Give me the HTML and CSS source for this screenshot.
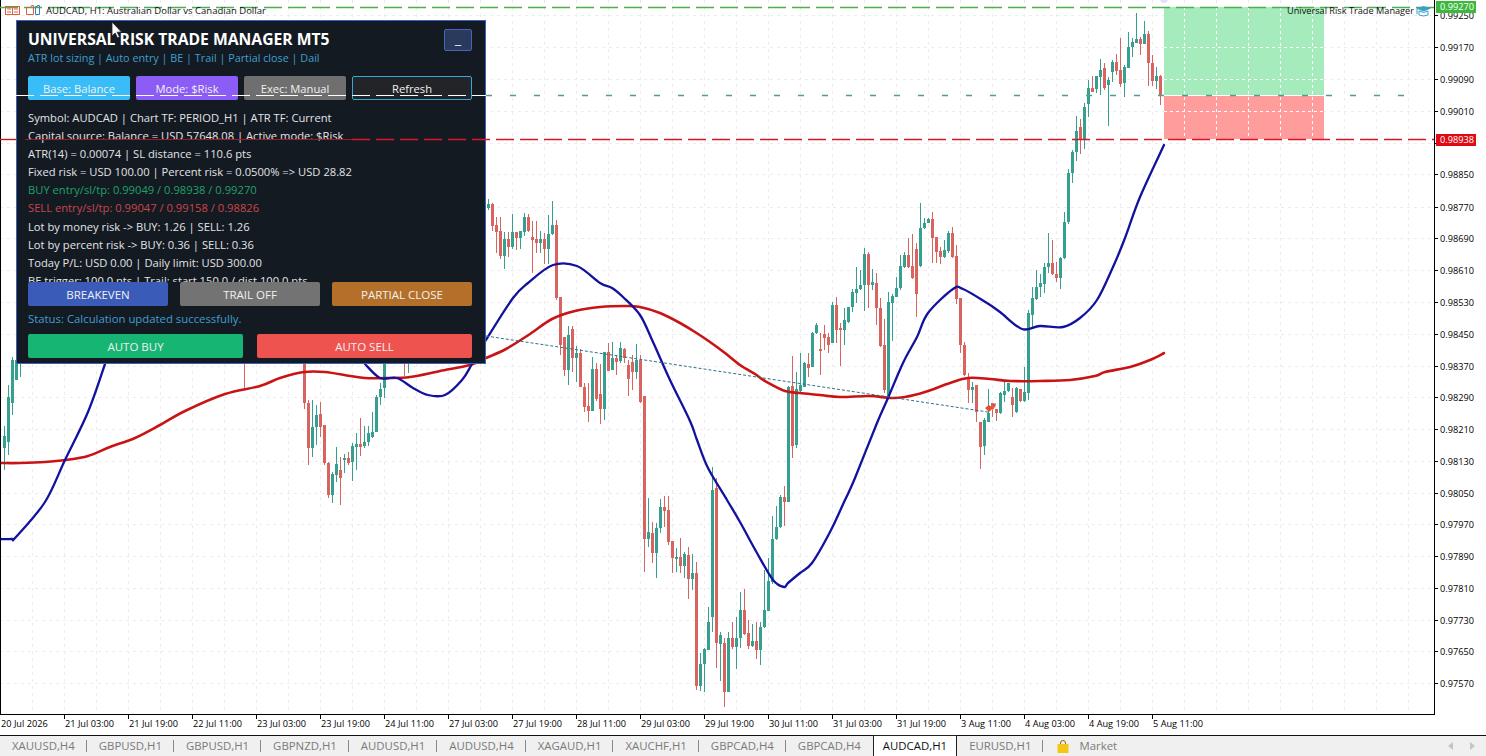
FILE: index.html
```html
<!DOCTYPE html>
<html lang="en">
<head>
    <meta charset="UTF-8">
    <title>AUDCAD,H1</title>
    <link rel="stylesheet" href="styles.css">
</head>
<body>
    <div class="chart">
        <svg id="plot" class="plot" width="1486" height="736"></svg>

        <div class="panel">
            <div class="panel_head">
                <div>
                    <div class="panel_title">UNIVERSAL RISK TRADE MANAGER MT5</div>
                    <div class="panel_sub">ATR lot sizing | Auto entry | BE | Trail | Partial close | Dail</div>
                </div>
                <button class="btn_min">_</button>
            </div>
            <div class="row_top">
                <button class="btn btn_base">Base: Balance</button>
                <button class="btn btn_mode">Mode: $Risk</button>
                <button class="btn btn_exec">Exec: Manual</button>
                <button class="btn btn_refresh">Refresh</button>
            </div>
            <div class="info">
                <div>Symbol: AUDCAD | Chart TF: PERIOD_H1 | ATR TF: Current</div>
                <div>Capital source: Balance = USD 57648.08 | Active mode: $Risk</div>
                <div>ATR(14) = 0.00074 | SL distance = 110.6 pts</div>
                <div>Fixed risk = USD 100.00 | Percent risk = 0.0500% =&gt; USD 28.82</div>
                <div class="info_buy">BUY entry/sl/tp: 0.99049 / 0.98938 / 0.99270</div>
                <div class="info_sell">SELL entry/sl/tp: 0.99047 / 0.99158 / 0.98826</div>
                <div>Lot by money risk -&gt; BUY: 1.26 | SELL: 1.26</div>
                <div>Lot by percent risk -&gt; BUY: 0.36 | SELL: 0.36</div>
                <div>Today P/L: USD 0.00 | Daily limit: USD 300.00</div>
                <div>BE trigger: 100.0 pts | Trail: start 150.0 / dist 100.0 pts</div>
            </div>
            <div class="row_mid">
                <button class="btn btn_be">BREAKEVEN</button>
                <button class="btn btn_trail">TRAIL OFF</button>
                <button class="btn btn_partial">PARTIAL CLOSE</button>
            </div>
            <div class="status">Status: Calculation updated successfully.</div>
            <div class="row_auto">
                <button class="btn btn_buy">AUTO BUY</button>
                <button class="btn btn_sell">AUTO SELL</button>
            </div>
        </div>

        <svg id="over" class="over" width="1486" height="736"></svg>
    </div>

    <div class="tabs">
        <div class="tab">XAUUSD,H4</div>
        <div class="tab">GBPUSD,H1</div>
        <div class="tab">GBPUSD,H1</div>
        <div class="tab">GBPNZD,H1</div>
        <div class="tab">AUDUSD,H1</div>
        <div class="tab">AUDUSD,H4</div>
        <div class="tab">XAGAUD,H1</div>
        <div class="tab">XAUCHF,H1</div>
        <div class="tab">GBPCAD,H4</div>
        <div class="tab tab_last">GBPCAD,H4</div>
        <div class="tab tab_active">AUDCAD,H1</div>
        <div class="tab">EURUSD,H1</div>
        <div class="tab tab_market">
            <svg width="12" height="13" viewBox="0 0 12 13">
                <path d="M3.500 5V3a2.500 2.500 0 0 1 5 0v2" fill="none" stroke="#8a6a10" stroke-width="1"/>
                <rect x="0.5" y="4" width="11" height="9" fill="#f5c518"/>
            </svg>
            Market
        </div>
        <div class="tabs_nav">
            <svg width="6" height="8" viewBox="0 0 6 8"><path d="M5 0v8L0 4z" fill="#c4c4c4"/></svg>
            <svg width="6" height="8" viewBox="0 0 6 8"><path d="M1 0v8l5-4z" fill="#c4c4c4"/></svg>
        </div>
    </div>

    <script src="chart.js"></script>
</body>
</html>
```

FILE: styles.css
```css
* {
    box-sizing: border-box;
}
body {
    margin: 0;
    width: 1486px;
    height: 756px;
    overflow: hidden;
    background-color: #fff;
    font-family: "Open Sans", "Noto Sans", sans-serif;
}
.chart {
    position: relative;
    height: 736px;
}
.plot, .over {
    display: block;
}
.over {
    position: absolute;
    left: 0;
    top: 0;
    pointer-events: none;
}
.axis_text {
    font-family: "Open Sans", sans-serif;
    font-size: 9.2px;
    fill: #000;
}
.top_text {
    font-family: "Open Sans", sans-serif;
    font-size: 9.5px;
    fill: #111;
}
.top_text_right {
    font-family: "Open Sans", sans-serif;
    font-size: 9.2px;
    fill: #111;
}

/* panel */
.panel {
    position: absolute;
    left: 16px;
    top: 20px;
    width: 470px;
    height: 344px;
    padding: 8px 13px 0 11px;
    background-color: #141a22;
    border: 1px solid #3d5fc0;
    color: #e2e4e6;
    display: flex;
    flex-direction: column;
}
.panel_head {
    display: flex;
    justify-content: space-between;
    height: 47px;
}
.panel_title {
    font-size: 15.7px;
    font-weight: 700;
    line-height: 21px;
    color: #fff;
}
.panel_sub {
    font-size: 10.8px;
    line-height: 16px;
    color: #3f9fd0;
}
.btn_min {
    width: 28px;
    height: 22px;
    padding: 0;
    background-color: #2a3a5e;
    border: 1px solid #4a62b8;
    border-radius: 2px;
    color: #fff;
    font-size: 11px;
}
.btn {
    height: 24px;
    padding: 0;
    border: 0;
    border-radius: 2px;
    color: #f0f0f0;
    font-family: inherit;
    font-size: 11.5px;
}
.row_top {
    display: flex;
    gap: 6px;
}
.row_top .btn {
    width: 102px;
    font-size: 11.2px;
}
.row_top .btn_refresh {
    width: 120px;
    background-color: #222428;
    border: 1px solid #38a8d8;
}
.btn_base { background-color: #38bdf8; }
.btn_mode { background-color: #8b5cf6; }
.btn_exec { background-color: #6f6f6f; }
.info {
    margin-top: 9px;
    height: 173px;
    overflow: hidden;
    font-size: 11.2px;
    line-height: 18.1px;
    flex: none;
}
.info_buy { color: #1fa168; }
.info_sell { color: #c8474b; }
.row_mid {
    display: flex;
    gap: 12px;
}
.row_mid .btn {
    width: 140px;
}
.btn_be { background-color: #3a5bb8; }
.btn_trail { background-color: #737373; }
.btn_partial { background-color: #b4702a; }
.status {
    height: 28px;
    line-height: 26px;
    font-size: 11.35px;
    color: #3f9fd0;
}
.row_auto {
    display: flex;
    gap: 14px;
}
.row_auto .btn {
    width: 215px;
}
.btn_buy { background-color: #16b574; }
.btn_sell { background-color: #ef5350; }

/* tabs */
.tabs {
    display: flex;
    align-items: stretch;
    height: 20px;
    background-color: #f0f0f0;
    font-size: 11.4px;
    color: #7a7a7a;
    line-height: 20px;
}
.tab {
    position: relative;
    padding: 0 12px 0 12px;
    white-space: nowrap;
}
.tab::after {
    content: "";
    position: absolute;
    right: 0;
    top: 4px;
    height: 12px;
    border-right: 1px solid #8a8a8a;
}
.tab_last::after, .tab_active::after, .tab_market::after {
    display: none;
}
.tab_active {
    background-color: #fff;
    color: #111;
    border: 1px solid #222;
    border-bottom: 0;
    margin: -1px 0 0 0;
    padding: 0 9px;
    height: 21px;
}
.tab_market {
    display: flex;
    align-items: center;
    gap: 10px;
    padding-left: 14px;
}
.tabs_nav {
    margin-left: auto;
    margin-right: 11px;
    display: flex;
    align-items: center;
    gap: 15px;
}
```

FILE: chart.js
```js
// g/r x wickTop bodyTop bodyBot wickBot
const BARS = `
g 4 426 436 448 470
g 8 385 397 442 455
g 12 357 360 403 415
g 16 355 360 380 380
g 20 360 362 364 377
r 244 360 362 364 388
r 304 360 362 403 409
r 308 400 403 448 465
g 312 400 427 448 457
g 316 405 415 427 445
r 320 402 414 427 437
r 324 425 425 463 465
r 328 462 463 495 498
g 332 472 474 495 503
g 336 447 464 475 482
r 340 457 470 478 505
g 344 454 458 460 473
r 348 452 458 463 465
g 352 443 446 462 481
g 356 433 444 447 470
r 360 418 444 447 456
g 364 426 442 446 448
g 368 426 433 442 446
g 372 412 432 437 438
g 376 395 397 432 432
g 380 383 389 397 405
g 384 360 362 388 398
r 404 360 362 364 376
g 408 360 362 364 373
g 488 199 204 208 210
r 492 203 204 226 231
r 496 217 225 232 253
r 500 217 231 256 259
g 504 232 239 256 269
r 508 232 239 247 257
g 512 214 232 247 249
r 516 232 232 238 250
g 520 231 231 238 249
g 524 213 217 232 236
r 528 214 217 231 232
r 532 221 237 240 273
r 536 221 239 243 253
g 540 231 239 243 253
r 544 233 239 249 264
g 548 215 234 249 264
g 552 201 225 234 235
r 556 220 225 298 300
r 560 297 297 345 355
r 564 337 337 370 376
g 568 326 335 370 385
r 572 326 329 358 372
g 576 346 353 358 382
r 580 349 353 387 387
r 584 383 387 407 412
r 588 383 406 411 422
g 592 357 369 411 411
r 596 363 369 399 401
r 600 364 394 409 424
g 604 352 352 409 420
r 608 343 352 371 371
g 612 342 358 370 370
r 616 355 358 362 375
g 620 342 348 361 363
r 624 348 349 358 363
r 628 360 365 379 396
r 632 355 362 372 390
g 636 344 360 372 379
r 640 355 360 402 403
r 644 396 396 539 572
g 648 498 532 539 547
r 652 522 533 553 563
g 656 523 528 553 578
g 660 499 507 528 533
r 664 496 507 511 527
r 668 496 510 542 545
r 672 541 541 558 573
g 676 548 557 559 572
r 680 538 557 566 573
g 684 552 554 566 578
r 688 547 555 579 599
g 692 554 573 579 590
r 696 562 573 686 690
g 700 653 664 686 691
g 704 648 649 664 692
g 708 607 622 650 650
g 712 467 490 617 632
r 716 478 488 643 668
g 720 632 635 644 681
r 724 638 643 692 707
g 728 632 638 692 692
r 732 622 638 647 649
g 736 617 638 647 669
g 740 592 610 638 648
r 744 589 610 634 635
r 748 620 633 646 649
g 752 624 641 646 647
r 756 622 641 650 659
g 760 622 627 650 665
g 764 570 610 627 628
g 768 558 581 611 611
g 772 516 539 582 584
g 776 506 527 539 540
g 780 495 497 527 528
r 784 486 497 502 526
g 788 386 387 502 502
r 792 356 386 446 458
g 796 372 389 445 448
g 800 353 385 391 392
g 804 362 363 387 387
r 808 353 364 368 377
g 812 332 333 367 367
g 816 323 325 333 334
r 820 333 349 351 375
r 824 325 334 338 350
r 828 333 337 345 353
g 832 302 305 343 343
r 836 297 305 330 343
r 840 323 328 330 366
g 844 308 320 330 345
g 848 307 307 322 323
g 852 289 292 307 312
g 856 267 289 293 303
g 860 270 285 289 290
g 864 248 254 285 311
r 868 252 254 285 308
g 872 269 282 285 290
r 876 273 283 308 325
r 880 298 308 346 347
r 884 319 345 390 393
g 888 292 302 398 398
g 892 294 296 303 341
g 896 277 288 297 297
g 900 255 266 288 290
g 904 252 255 267 268
r 908 238 255 267 268
r 912 234 266 278 279
r 916 243 249 294 317
g 920 203 228 266 267
g 924 218 223 228 229
g 928 218 219 223 223
r 932 212 219 238 263
r 936 237 237 252 263
r 940 247 251 257 264
g 944 240 250 257 258
g 948 231 233 251 253
r 952 227 233 257 258
r 956 245 256 299 304
r 960 298 298 345 353
r 964 342 345 375 376
r 968 373 377 390 403
g 972 382 387 390 403
r 976 385 385 412 422
r 980 422 422 447 469
g 984 418 420 446 455
g 988 389 413 422 422
r 992 403 403 409 417
r 996 409 409 413 421
g 1000 392 393 413 414
g 1004 382 391 395 402
g 1008 383 383 391 392
r 1012 388 397 405 417
g 1016 387 388 412 413
r 1020 389 389 401 402
g 1024 367 392 401 402
g 1028 310 313 393 400
g 1032 287 298 315 328
g 1036 270 287 299 300
g 1040 274 283 287 297
g 1044 263 267 284 293
g 1048 233 263 267 273
r 1052 240 263 274 275
r 1056 262 274 278 282
g 1060 257 258 278 289
g 1064 212 222 258 259
g 1068 169 173 222 224
g 1072 150 152 173 183
g 1076 116 131 152 161
r 1080 119 127 140 154
g 1084 103 107 140 149
g 1088 80 88 104 117
r 1092 76 88 92 92
g 1096 76 76 89 93
g 1100 59 70 77 95
r 1104 63 68 88 90
g 1108 77 80 85 126
g 1112 60 62 72 82
r 1116 54 62 71 75
r 1120 38 70 84 87
g 1124 65 67 83 97
g 1128 32 47 68 68
g 1132 38 42 47 57
g 1136 13 39 43 43
r 1140 37 39 44 55
g 1144 21 34 44 44
r 1148 31 34 63 86
r 1152 55 63 81 86
g 1156 67 76 81 89
r 1160 75 76 95 105
`;

const BLUE = [
    "0,539 12,539 16,537 45,502 65,460 88,412 105,364",
    "365,364 380,378 397,378 413,388 428,395 445,395 462,380 472,364 486,340 513,298 528,283 553,265 577,266 600,283 612,288 623,297 640,315 653,342 670,380 690,421 697,440 708,468 727,500 740,522 757,553 773,580 784,587 788,583 800,573 812,563 830,532 845,500 855,478 877,423 888,398 903,363 917,337 928,313 953,289 963,289 987,303 1000,312 1022,329 1040,326 1063,327 1080,318 1097,300 1113,267 1125,238 1140,197 1164,145"
];
const RED = "0,463 20,463 45,462 66,460 88,456 110,447 135,438 160,425 185,411 225,394 260,386 280,378 304,372 325,372 350,376 365,378 385,378 410,377 440,371 470,365 486,358 506,349 530,334 552,319 575,311 600,307 625,306 640,307 660,313 680,323 695,332 710,342 725,353 740,365 755,374 765,381 785,391 800,393 820,395 840,397 870,396 890,398 905,397 925,392 950,383 968,378 990,379 1010,381 1040,381 1070,380 1095,376 1105,372 1130,367 1150,360 1164,353";

const PRICES = [
    ["0.99250", 15], ["0.99170", 47], ["0.99090", 79], ["0.99010", 111], ["", 143],
    ["0.98850", 174], ["0.98770", 207], ["0.98690", 238], ["0.98610", 270], ["0.98530", 302],
    ["0.98450", 334], ["0.98370", 366], ["0.98290", 397], ["0.98210", 429], ["0.98130", 461],
    ["0.98050", 493], ["0.97970", 524], ["0.97890", 556], ["0.97810", 588], ["0.97730", 620],
    ["0.97650", 651], ["0.97570", 683]
];
const TIMES = [
    "20 Jul 2026", "21 Jul 03:00", "21 Jul 19:00", "22 Jul 11:00", "23 Jul 03:00", "23 Jul 19:00",
    "24 Jul 11:00", "27 Jul 03:00", "27 Jul 19:00", "28 Jul 11:00", "29 Jul 03:00", "29 Jul 19:00",
    "30 Jul 11:00", "31 Jul 03:00", "31 Jul 19:00", "3 Aug 11:00", "4 Aug 03:00", "4 Aug 19:00", "5 Aug 11:00"
];

const line = (x1, y1, x2, y2, color, dash, w) =>
    `<line x1="${x1}" y1="${y1}" x2="${x2}" y2="${y2}" stroke="${color}" stroke-width="${w || 1}"` +
    (dash ? ` stroke-dasharray="${dash}"` : "") + `/>`;
const rect = (x, y, w, h, color) => `<rect x="${x}" y="${y}" width="${w}" height="${h}" fill="${color}"/>`;
const text = (x, y, s, cls, fill) =>
    `<text x="${x}" y="${y}" class="${cls}"` + (fill ? ` style="fill:${fill}"` : "") + `>${s}</text>`;

// catmull-rom through the points, the MA lines are not angular
const curve = (str, color, w) => {
    const p = str.split(" ").map(a => a.split(",").map(Number));
    let d = `M${p[0][0]} ${p[0][1]}`;
    for (let i = 0; i < p.length - 1; i++) {
        const a = p[i - 1] || p[i], b = p[i], c = p[i + 1], e = p[i + 2] || c;
        const c1 = [b[0] + (c[0] - a[0]) / 6, b[1] + (c[1] - a[1]) / 6];
        const c2 = [c[0] - (e[0] - b[0]) / 6, c[1] - (e[1] - b[1]) / 6];
        d += `C${c1[0].toFixed(1)} ${c1[1].toFixed(1)} ${c2[0].toFixed(1)} ${c2[1].toFixed(1)} ${c[0]} ${c[1]}`;
    }
    return `<path d="${d}" fill="none" stroke="${color}" stroke-width="${w}" stroke-linecap="round"/>`;
};

let s = "";

// grid
for (let x = 32; x < 1434; x += 32) s += line(x + 0.5, 0, x + 0.5, 714, "#ececec", "3 4");
PRICES.forEach(p => { s += line(0, p[1] + 0.5, 1434, p[1] + 0.5, "#ececec", "3 4"); });

// candles
BARS.trim().split("\n").forEach(row => {
    const [c, x0, wt, bt, bb, wb] = row.split(" ");
    const x = +x0;
    const color = c === "g" ? "#35a08f" : "#d9645f";
    s += rect(x, +wt, 1, wb - wt, color);
    s += rect(x - 1, +bt, 3, Math.max(bb - bt, 1), color);
});

// SL/TP boxes, the grid shows through them in white
s += rect(1164, 7, 160, 88, "#a6ebbb");
s += rect(1164, 96, 160, 43, "#ff9d9d");
for (let x = 1184; x < 1324; x += 32) s += line(x + 0.5, 7, x + 0.5, 139, "#fff", "3 3");
[47, 79, 111].forEach(y => { s += line(1164, y + 0.5, 1324, y + 0.5, "#fff", "3 3"); });
s += line(1164, 95.5, 1324, 95.5, "#fff");

// moving averages and trend line
s += curve(RED, "#c81414", 2.6);
BLUE.forEach(b => { s += curve(b, "#12129e", 2.3); });
s += line(486, 336, 988, 412, "#2f7288", "3 2");
s += `<path d="M985 408l4-3 4 3-4 4zM992 405l4-2-1 5z" fill="#e0522a"/>`;

// axes
s += line(0.5, 0, 0.5, 714, "#000");
s += line(0, 714.5, 1435, 714.5, "#000");
s += line(1434.5, 0, 1434.5, 715, "#000");
s += line(0, 735.5, 1486, 735.5, "#111");
PRICES.forEach(p => {
    s += line(1434, p[1] + 0.5, 1438, p[1] + 0.5, "#000");
    if (p[0]) s += text(1440, p[1] + 3.5, p[0], "axis_text");
});
TIMES.forEach((t, i) => {
    const x = i * 64;
    if (i) s += line(x + 0.5, 714, x + 0.5, 719, "#000");
    s += text(x + 1, 727, t, "axis_text");
});

document.getElementById("plot").innerHTML = s;

// everything that draws above the panel
let o = "";
o += line(0, 7.5, 1434, 7.5, "#4caf50", "18 6", 1.4);
o += line(486, 95.5, 1416, 95.5, "#4f9c98", "6 18", 1.4);
o += line(16, 95.5, 486, 95.5, "#fff", "18 6", 1.2);
o += line(0, 139.5, 16, 139.5, "#d0101e", "", 1.4);
o += line(25, 139.5, 352, 139.5, "#a01a26", "", 1.2);
o += line(352, 139.5, 1434, 139.5, "#d8152a", "18 6", 1.4);

o += rect(1436, 1, 40, 12, "#3cb83c");
o += text(1440, 10, "0.99270", "axis_text", "#fff");
o += rect(1436, 134, 40, 12, "#e00a14");
o += text(1440, 143, "0.98938", "axis_text", "#fff");

// chart icons and captions
o += `<g fill="none" stroke="#d9603c"><rect x="5.5" y="6.5" width="14" height="8"/><path d="M12.500 6.500v8M7 9h4M7 12h4M14 9h4M14 12h4"/></g>`;
o += `<path d="M26.500 7.500h4l1-2h2v9h-7z" fill="none" stroke="#d9603c"/><path d="M35.500 6.500h2v-1h2v9h-4z" fill="none" stroke="#3a7fc0"/>`;
o += text(46, 14, "AUDCAD, H1:  Australian Dollar vs Canadian Dollar", "top_text");
o += text(1287, 14, "Universal Risk Trade Manager", "top_text_right");
o += `<path d="M1416 8.500l7.500-2.500 7.500 2.500-7.500 3z" fill="#3f9fc8"/><path d="M1419 11v4q4.500 2 9 0v-4l-4.500 1.500z" fill="none" stroke="#3f9fc8"/><path d="M1417 9v5" stroke="#3f9fc8"/>`;
o += `<circle cx="1164" cy="-1" r="4" fill="#e6dff5"/>`;

// mouse pointer
o += `<path d="M112 22v14l3.200-3 2.300 5 2-1-2.300-4.800 4.300-.200z" fill="#fff" stroke="#222" stroke-width=".8"/>`;

document.getElementById("over").innerHTML = o;
```
